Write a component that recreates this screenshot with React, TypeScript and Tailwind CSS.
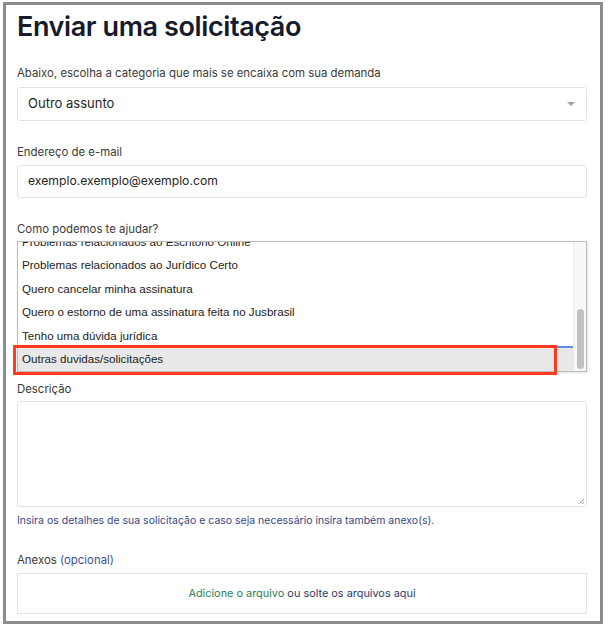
import React from 'react';

const options = [
  'Problemas relacionados ao Escritório Online',
  'Problemas relacionados ao Jurídico Certo',
  'Quero cancelar minha assinatura',
  'Quero o estorno de uma assinatura feita no Jusbrasil',
  'Tenho uma dúvida jurídica',
  'Outras duvidas/solicitações',
];

function Label({ children }: { children: React.ReactNode }) {
  return <p className="text-[11.4px] leading-[16px] text-[#3a3a3a]">{children}</p>;
}

export default function App() {
  return (
    <div className="bg-white w-[608px] h-[627px] pt-[2px] pl-[3px] font-['Inter',sans-serif]">
      <div className="w-[600px] h-[622px] border-[3px] border-[#8c8c8c] overflow-hidden pl-[11px] pr-[13px] pt-[5px]">
        <h1 className="text-[27px] leading-[34px] font-semibold text-[#161b2c] tracking-[-0.4px]">
          Enviar uma solicitação
        </h1>

        <div className="mt-[21px]">
          <Label>Abaixo, escolha a categoria que mais se encaixa com sua demanda</Label>
          <div className="mt-[6px] h-[34px] border border-[#e3e3e3] rounded-[3px] flex items-center justify-between px-[10px]">
            <span className="text-[13px] text-[#262626]">Outro assunto</span>
            <span className="w-0 h-0 border-l-[4px] border-r-[4px] border-t-[4px] border-l-transparent border-r-transparent border-t-[#a0a0a0] mr-[1px]" />
          </div>
        </div>

        <div className="mt-[23px]">
          <Label>Endereço de e-mail</Label>
          <div className="mt-[5px] h-[33px] border border-[#e3e3e3] rounded-[3px] flex items-center px-[10px]">
            <span className="text-[12.2px] text-[#262626]">exemplo.exemplo@exemplo.com</span>
          </div>
        </div>

        <div className="mt-[23px]">
          <Label>Como podemos te ajudar?</Label>
          <div className="relative mt-[4px]">
            <div className="h-[131px] border border-[#bdbdbd] shadow-[1px_1px_3px_rgba(0,0,0,0.12)] flex overflow-hidden bg-white">
              <div className="flex-1 overflow-hidden font-['Liberation_Sans',Arial,sans-serif]">
                <div className="-mt-[12.5px]">
                  {options.map((o, i) => (
                    <div
                      key={o}
                      className={`h-[23.5px] flex items-center pl-[4px] text-[11.6px] text-[#222] ${i === options.length - 1 ? 'bg-[#e8e8e8]' : ''}`}
                    >
                      {o}
                    </div>
                  ))}
                </div>
              </div>
              <div className="w-[13px] bg-[#f7f7f7] border-l border-[#ececec] flex flex-col justify-end pb-[2px] items-center">
                <div className="w-[7px] h-[60px] rounded-full bg-[#c1c1c1]" />
              </div>
            </div>
            <div className="absolute left-[537px] top-[105px] w-[19px] h-[2px] bg-[#5b8ee6]" />
            <div className="absolute -left-[4px] top-[104px] w-[544px] h-[30px] border-[3px] border-[#ff3a1f]" />
          </div>
        </div>

        <div className="mt-[9px]">
          <Label>Descrição</Label>
          <div className="relative mt-[4px] h-[106px] border border-[#e3e3e3] rounded-[2px]">
            <svg className="absolute right-[1px] bottom-[1px]" width="8" height="8" viewBox="0 0 8 8">
              <path d="M7 2 L2 7 M7 5 L5 7" stroke="#9a9a9a" strokeWidth="1" />
            </svg>
          </div>
          <p className="mt-[6px] text-[10.5px] leading-[16px] text-[#34468a]">
            Insira os detalhes de sua solicitação e caso seja necessário insira também anexo(s).
          </p>
        </div>

        <div className="mt-[23px]">
          <Label>
            Anexos <span className="text-[#3f4f9a]">(opcional)</span>
          </Label>
          <div className="mt-[5px] h-[41px] border border-[#e3e3e3] flex items-center justify-center text-[10.9px]">
            <span className="text-[#2e7d5b]">Adicione o arquivo</span>
            <span className="text-[#2f3a6b]">&nbsp;ou solte os arquivos aqui</span>
          </div>
        </div>
      </div>
    </div>
  );
}
